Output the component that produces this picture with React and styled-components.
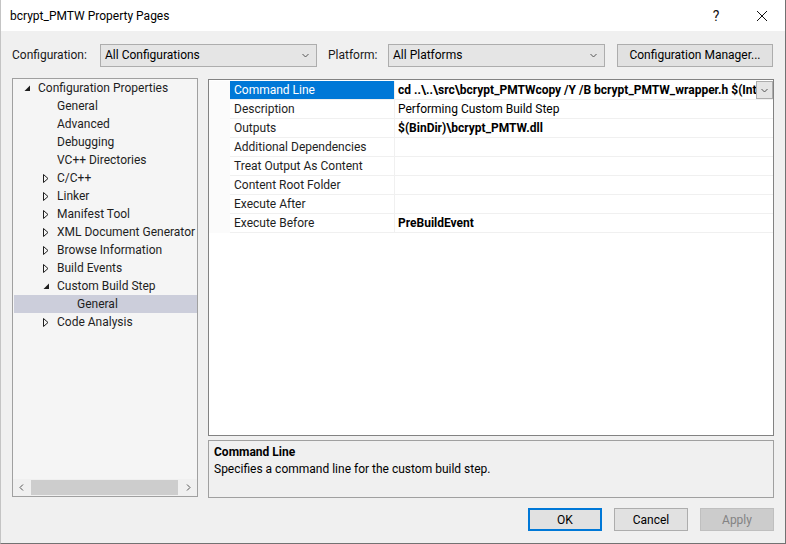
import React from "react";
import styled, { createGlobalStyle } from "styled-components";

const GlobalStyle = createGlobalStyle`
  html, body { margin: 0; padding: 0; background: #f0f0f0; }
  body {
    font-family: Roboto, "Liberation Sans", sans-serif;
    font-size: 12px;
    color: #000;
  }
  * { box-sizing: border-box; }
`;

const Window = styled.div`
  width: 786px;
  height: 544px;
  display: flex;
  flex-direction: column;
  background: #f0f0f0;
  border-left: 1px solid #c4c4c4;
  border-right: 1px solid #727272;
  border-bottom: 1px solid #727272;
`;

const TitleBar = styled.div`
  height: 31px;
  flex-shrink: 0;
  background: #fff;
  display: flex;
  align-items: center;
  padding-left: 9px;
`;

const Title = styled.div`
  flex: 1;
  font-size: 12px;
`;

const TitleButton = styled.div`
  width: 46px;
  height: 31px;
  display: flex;
  align-items: center;
  justify-content: center;
  font-size: 14px;
  color: #111;
`;

const Body = styled.div`
  flex: 1;
  display: flex;
  flex-direction: column;
  padding: 12px 11px 0 11px;
`;

const Toolbar = styled.div`
  height: 24px;
  display: flex;
  align-items: center;
`;

const Label = styled.div`
  width: ${({ w }) => w}px;
  margin-left: ${({ ml }) => ml || 0}px;
  color: #1a1a1a;
`;

const Select = styled.div`
  width: 217px;
  height: 23px;
  border: 1px solid #adadad;
  background: #e5e5e5;
  display: flex;
  align-items: center;
  padding: 0 7px 0 4px;
  color: #000;
`;

const SelectText = styled.span`
  flex: 1;
`;

const Button = styled.div`
  width: ${({ w }) => w || 74}px;
  height: 23px;
  margin-left: ${({ ml }) => ml || 0}px;
  display: flex;
  align-items: center;
  justify-content: center;
  background: ${({ disabled }) => (disabled ? "#cccccc" : "#e1e1e1")};
  border: ${({ primary, disabled }) =>
    primary ? "2px solid #0078d7" : disabled ? "1px solid #bfbfbf" : "1px solid #adadad"};
  color: ${({ disabled }) => (disabled ? "#838383" : "#000")};
`;

const Main = styled.div`
  margin-top: 11px;
  height: 420px;
  display: flex;
  gap: 10px;
`;

const Tree = styled.div`
  width: 186px;
  height: 419px;
  border: 1px solid #a0a0a0;
  background: #f5f5f5;
  display: flex;
  flex-direction: column;
  overflow: hidden;
`;

const TreeList = styled.div`
  flex: 1;
  overflow: hidden;
`;

const TreeRow = styled.div`
  height: 18px;
  display: flex;
  align-items: center;
  padding-left: ${({ level }) => 7 + level * 19}px;
  margin-left: ${({ selected }) => (selected ? 1 : 0)}px;
  background: ${({ selected }) => (selected ? "#cccedb" : "transparent")};
  color: #1e1e1e;
  white-space: nowrap;
`;

const Expander = styled.span`
  width: 18px;
  flex-shrink: 0;
  display: flex;
  align-items: center;
  padding-left: 4px;
`;

const HScroll = styled.div`
  height: 17px;
  display: flex;
  align-items: center;
  background: #f0f0f0;
`;

const ScrollArrow = styled.div`
  width: 17px;
  height: 17px;
  display: flex;
  align-items: center;
  justify-content: center;
`;

const ScrollTrack = styled.div`
  flex: 1;
  height: 15px;
  display: flex;
`;

const ScrollThumb = styled.div`
  width: 147px;
  margin-left: 1px;
  background: #cdcdcd;
`;

const RightCol = styled.div`
  flex: 1;
  display: flex;
  flex-direction: column;
  padding-top: 1px;
  gap: 4px;
`;

const Grid = styled.div`
  flex: 1;
  border: 1px solid #828282;
  background: #fff;
  display: flex;
  flex-direction: column;
  padding-top: 1px;
`;

const GridRow = styled.div`
  display: grid;
  grid-template-columns: 21px 164px 1fr;
  height: 19px;
`;

const Margin = styled.div`
  background: #fbfbfb;
`;

const NameCell = styled.div`
  padding-left: 4px;
  height: 19px;
  line-height: 18px;
  border-bottom: 1px solid #f0f0f0;
  background: ${({ selected }) => (selected ? "#0078d7" : "transparent")};
  color: ${({ selected }) => (selected ? "#fff" : "#1e1e1e")};
  white-space: nowrap;
  overflow: hidden;
`;

const ValueCell = styled.div`
  display: flex;
  height: 19px;
  border-left: 1px solid #f0f0f0;
  border-bottom: 1px solid #f0f0f0;
  min-width: 0;
`;

const ValueText = styled.div`
  flex: 1;
  padding-left: 3px;
  line-height: 18px;
  font-weight: ${({ bold }) => (bold ? 700 : 400)};
  color: #000;
  white-space: nowrap;
  overflow: hidden;
`;

const DropButton = styled.div`
  width: 17px;
  height: 18px;
  flex-shrink: 0;
  border: 1px solid #adadad;
  background: #e5e5e5;
  display: flex;
  align-items: center;
  justify-content: center;
`;

const Desc = styled.div`
  height: 58px;
  border: 1px solid #a0a0a0;
  background: #f0f0f0;
  padding: 3px 5px;
  line-height: 17px;
`;

const DescTitle = styled.div`
  font-weight: 700;
`;

const Footer = styled.div`
  margin-top: 10px;
  display: flex;
  justify-content: flex-end;
  gap: 12px;
`;

const Chevron = ({ dir = "down", size = 7 }) => {
  const paths = {
    down: "M0.5 1 L3.5 4 L6.5 1",
    left: "M4 0.5 L1 3.5 L4 6.5",
    right: "M1 0.5 L4 3.5 L1 6.5",
  };
  const vb = dir === "down" ? "0 0 7 5" : "0 0 5 7";
  const w = dir === "down" ? size : 5;
  const h = dir === "down" ? 5 : 7;
  return (
    <svg width={w} height={h} viewBox={vb}>
      <path d={paths[dir]} fill="none" stroke="#555" strokeWidth="1" />
    </svg>
  );
};

const ExpandedIcon = () => (
  <svg width="7" height="7" viewBox="0 0 7 7">
    <path d="M6 0.5 L6 6 L0.5 6 Z" fill="#1e1e1e" />
  </svg>
);

const CollapsedIcon = () => (
  <svg width="6" height="9" viewBox="0 0 6 9">
    <path d="M0.5 0.5 L5 4.5 L0.5 8.5 Z" fill="none" stroke="#1e1e1e" strokeWidth="1" />
  </svg>
);

const CloseIcon = () => (
  <svg width="10" height="10" viewBox="0 0 10 10">
    <path d="M0 0 L10 10 M10 0 L0 10" stroke="#111" strokeWidth="1" />
  </svg>
);

const tree = [
  { label: "Configuration Properties", level: 0, exp: "open" },
  { label: "General", level: 1 },
  { label: "Advanced", level: 1 },
  { label: "Debugging", level: 1 },
  { label: "VC++ Directories", level: 1 },
  { label: "C/C++", level: 1, exp: "closed" },
  { label: "Linker", level: 1, exp: "closed" },
  { label: "Manifest Tool", level: 1, exp: "closed" },
  { label: "XML Document Generator", level: 1, exp: "closed" },
  { label: "Browse Information", level: 1, exp: "closed" },
  { label: "Build Events", level: 1, exp: "closed" },
  { label: "Custom Build Step", level: 1, exp: "open" },
  { label: "General", level: 2, selected: true },
  { label: "Code Analysis", level: 1, exp: "closed" },
];

const props = [
  {
    name: "Command Line",
    value: "cd ..\\..\\src\\bcrypt_PMTWcopy /Y /B bcrypt_PMTW_wrapper.h $(IntDir)",
    bold: true,
    selected: true,
  },
  { name: "Description", value: "Performing Custom Build Step" },
  { name: "Outputs", value: "$(BinDir)\\bcrypt_PMTW.dll", bold: true },
  { name: "Additional Dependencies", value: "" },
  { name: "Treat Output As Content", value: "" },
  { name: "Content Root Folder", value: "" },
  { name: "Execute After", value: "" },
  { name: "Execute Before", value: "PreBuildEvent", bold: true },
];

const App = () => {
  return (
    <Window>
      <GlobalStyle />
      <TitleBar>
        <Title>bcrypt_PMTW Property Pages</Title>
        <TitleButton>?</TitleButton>
        <TitleButton>
          <CloseIcon />
        </TitleButton>
      </TitleBar>
      <Body>
        <Toolbar>
          <Label w={88}>Configuration:</Label>
          <Select>
            <SelectText>All Configurations</SelectText>
            <Chevron />
          </Select>
          <Label w={60} ml={11}>Platform:</Label>
          <Select>
            <SelectText>All Platforms</SelectText>
            <Chevron />
          </Select>
          <Button w={156} ml={12}>Configuration Manager...</Button>
        </Toolbar>
        <Main>
          <Tree>
            <TreeList>
              {tree.map((item, i) => (
                <TreeRow key={i} level={item.level} selected={item.selected}>
                  <Expander>
                    {item.exp === "open" && <ExpandedIcon />}
                    {item.exp === "closed" && <CollapsedIcon />}
                  </Expander>
                  {item.label}
                </TreeRow>
              ))}
            </TreeList>
            <HScroll>
              <ScrollArrow>
                <Chevron dir="left" />
              </ScrollArrow>
              <ScrollTrack>
                <ScrollThumb />
              </ScrollTrack>
              <ScrollArrow>
                <Chevron dir="right" />
              </ScrollArrow>
            </HScroll>
          </Tree>
          <RightCol>
            <Grid>
              {props.map((p, i) => (
                <GridRow key={i}>
                  <Margin />
                  <NameCell selected={p.selected}>{p.name}</NameCell>
                  <ValueCell>
                    <ValueText bold={p.bold}>{p.value}</ValueText>
                    {p.selected && (
                      <DropButton>
                        <Chevron />
                      </DropButton>
                    )}
                  </ValueCell>
                </GridRow>
              ))}
            </Grid>
            <Desc>
              <DescTitle>Command Line</DescTitle>
              <div>Specifies a command line for the custom build step.</div>
            </Desc>
          </RightCol>
        </Main>
        <Footer>
          <Button primary>OK</Button>
          <Button>Cancel</Button>
          <Button disabled>Apply</Button>
        </Footer>
      </Body>
    </Window>
  );
};

export default App;
